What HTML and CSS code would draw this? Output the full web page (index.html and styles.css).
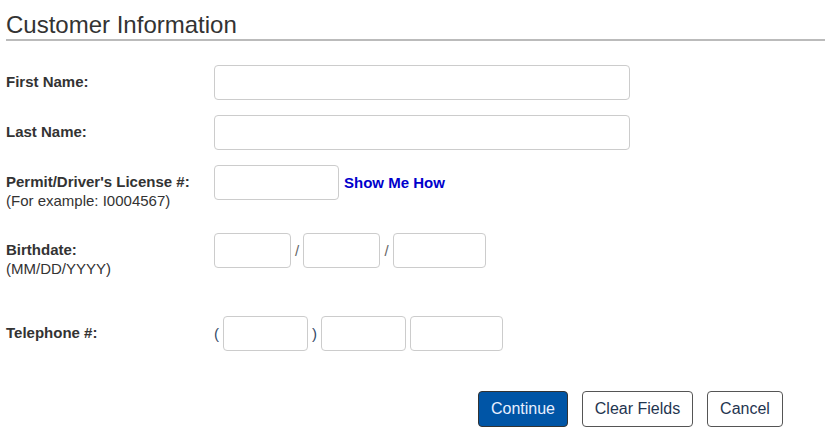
FILE: index.html
```html
<!DOCTYPE html>
<html>
<head>
<meta charset="utf-8">
<link rel="stylesheet" href="styles.css">
</head>
<body>
<div class="page">
  <h1 class="title">Customer Information</h1>
  <form class="form">
    <div class="row">
      <div class="label"><b>First Name:</b></div>
      <div class="fields"><input class="inp w-name" type="text"></div>
    </div>
    <div class="row">
      <div class="label"><b>Last Name:</b></div>
      <div class="fields"><input class="inp w-name" type="text"></div>
    </div>
    <div class="row row-tall">
      <div class="label"><b>Permit/Driver's License #:</b><br>(For example: I0004567)</div>
      <div class="fields"><input class="inp w-lic" type="text"><a class="link" href="#">Show Me How</a></div>
    </div>
    <div class="row row-birth">
      <div class="label"><b>Birthdate:</b><br>(MM/DD/YYYY)</div>
      <div class="fields">
        <input class="inp w-md" type="text"><span class="sep sep-a">/</span><input class="inp w-md" type="text"><span class="sep sep-b">/</span><input class="inp w-yr" type="text">
      </div>
    </div>
    <div class="row row-phone">
      <div class="label"><b>Telephone #:</b></div>
      <div class="fields">
        <span class="paren paren-open">(</span><input class="inp w-ph" type="text"><span class="paren paren-close">)</span><input class="inp w-ph" type="text"><input class="inp w-yr ph-last" type="text">
      </div>
    </div>
    <div class="actions">
      <button type="button" class="btn btn-primary">Continue</button>
      <button type="button" class="btn btn-clear">Clear Fields</button>
      <button type="button" class="btn btn-cancel">Cancel</button>
    </div>
  </form>
</div>
</body>
</html>
```
FILE: styles.css
```css
* { box-sizing: border-box; }
html, body { margin: 0; padding: 0; background: #fff; }
body { font-family: "Liberation Sans", Arial, sans-serif; color: #333; font-size: 15px; }
.page { padding-left: 6px; }
.title {
  margin: 0;
  padding-top: 11px;
  font-size: 24px;
  line-height: 28px;
  font-weight: normal;
  color: #333;
  border-bottom: 2px solid #bbb;
}
.form { margin-top: 24px; }
.row { display: flex; align-items: flex-start; margin-bottom: 15px; }
.row-tall { margin-bottom: 23px; }
.row-birth { margin-bottom: 38px; }
.row-phone { margin-bottom: 40px; }
.label { width: 208px; padding-top: 7px; line-height: 19px; font-size: 15px; color: #333; }
.label b { font-weight: bold; }
.fields { display: flex; align-items: center; }
.inp {
  height: 35px;
  border: 1px solid #ccc;
  border-radius: 4px;
  background: #fff;
  margin: 0;
  padding: 0 6px;
  font: inherit;
}
.w-name { width: 416px; }
.w-lic { width: 125px; }
.w-md { width: 77px; }
.w-yr { width: 93px; }
.w-ph { width: 85px; }
.ph-last { margin-left: 4px; }
.link { margin-left: 5px; color: #0000cc; font-weight: bold; text-decoration: none; font-size: 15px; }
.sep { text-align: center; color: #666; font-size: 15px; }
.sep-a { width: 12px; }
.sep-b { width: 13px; }
.paren { color: #334a66; font-size: 15px; }
.paren-open { width: 9px; text-align: left; }
.paren-close { width: 13px; text-align: center; }
.actions { display: flex; justify-content: flex-end; gap: 14px; padding-right: 42px; }
.btn {
  height: 36px;
  padding: 0;
  border: 1px solid #555;
  border-radius: 4px;
  background: #fff;
  color: #1f3550;
  font-family: "Liberation Sans", Arial, sans-serif;
  font-size: 16px;
  text-align: center;
}
.btn-primary { width: 90px; background: #0055a6; color: #e8f0ff; border-color: #333; }
.btn-clear { width: 111px; }
.btn-cancel { width: 76px; }
```
